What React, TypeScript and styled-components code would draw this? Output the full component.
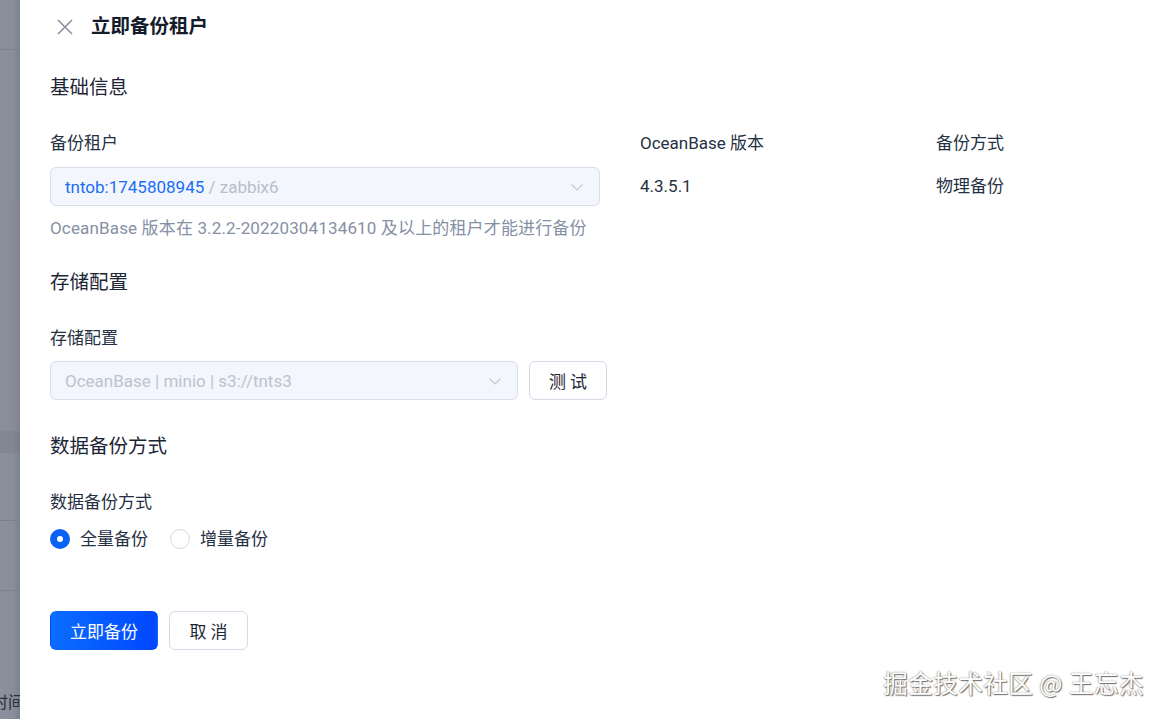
import React from "react";
import styled, { createGlobalStyle } from "styled-components";

const Global = createGlobalStyle`
  html, body { margin: 0; padding: 0; background: #fff; }
  body { font-family: Roboto, "Noto Sans CJK SC", sans-serif; }
  * { box-sizing: border-box; }
`;

const Screen = styled.div`
  display: flex;
  width: 1164px;
  height: 719px;
  overflow: hidden;
  position: relative;
`;

const Backdrop = styled.div`
  width: 20px;
  flex: none;
  display: flex;
  flex-direction: column;
  background: linear-gradient(90deg, #8b909d 0%, #888d9a 65%, #7d8290 100%);
  overflow: hidden;
`;

const BackRow = styled.div<{ $h: number; $bg?: string; $line?: boolean }>`
  height: ${(p) => p.$h}px;
  flex: none;
  background: ${(p) => p.$bg || "transparent"};
  border-bottom: ${(p) => (p.$line ? "1px solid #7b808c" : "none")};
`;

const BackText = styled.div`
  margin-top: auto;
  margin-bottom: 6px;
  margin-left: -8px;
  font-size: 16px;
  line-height: 20px;
  color: #2c2f36;
  white-space: nowrap;
`;

const Drawer = styled.div`
  flex: 1;
  background: #fff;
  padding: 0 30px;
  display: flex;
  flex-direction: column;
`;

const Header = styled.div`
  height: 54px;
  display: flex;
  align-items: center;
  gap: 18px;
  padding-left: 7px;
`;

const CloseBtn = styled.span`
  width: 16px;
  height: 16px;
  display: inline-flex;
  color: #8a92a0;
`;

const Title = styled.div`
  font-size: 19.5px;
  font-weight: 700;
  color: #141c2b;
  line-height: 28px;
`;

const SectionTitle = styled.div<{ $mt: number }>`
  margin-top: ${(p) => p.$mt}px;
  font-size: 19.5px;
  line-height: 28px;
  color: #1c2535;
`;

const FieldsRow = styled.div`
  display: grid;
  grid-template-columns: 550px 256px 200px;
  column-gap: 40px;
  margin-top: 29px;
`;

const Field = styled.div`
  display: flex;
  flex-direction: column;
`;

const Label = styled.div<{ $mb?: number }>`
  font-size: 17px;
  line-height: 24px;
  color: #253043;
  margin-bottom: ${(p) => (p.$mb ?? 12)}px;
`;

const Value = styled.div`
  font-size: 17px;
  line-height: 39px;
  color: #253043;
`;

const Select = styled.div<{ $w?: number }>`
  width: ${(p) => (p.$w ? `${p.$w}px` : "100%")};
  flex: none;
  height: 39px;
  border: 1px solid #d8dfeb;
  border-radius: 6px;
  background: #f3f6fc;
  display: flex;
  align-items: center;
  padding: 0 14px;
  font-size: 17px;
`;

const SelectText = styled.span<{ $c: string }>`
  color: ${(p) => p.$c};
  white-space: pre;
`;

const Arrow = styled.span`
  margin-left: auto;
  display: inline-flex;
  color: #c2c9d5;
  margin-right: 1px;
`;

const Help = styled.div`
  margin-top: 10px;
  font-size: 17px;
  letter-spacing: 0.15px;
  line-height: 24px;
  color: #8590a4;
  white-space: nowrap;
`;

const Inline = styled.div`
  display: flex;
  align-items: center;
  gap: 11px;
`;

const Button = styled.button<{ $primary?: boolean; $w: number }>`
  width: ${(p) => p.$w}px;
  flex: none;
  height: 39px;
  border-radius: 6px;
  font-family: inherit;
  font-size: 17px;
  padding: 0;
  cursor: pointer;
  letter-spacing: ${(p) => (p.$primary ? "0" : "4px")};
  text-indent: ${(p) => (p.$primary ? "0" : "4px")};
  color: ${(p) => (p.$primary ? "#fff" : "#1c2535")};
  background: ${(p) =>
    p.$primary ? "linear-gradient(90deg, #0b6dff 0%, #0047ff 100%)" : "#fff"};
  border: 1px solid ${(p) => (p.$primary ? "transparent" : "#d5dbe6")};
`;

const RadioGroup = styled.div`
  display: flex;
  align-items: center;
  gap: 22px;
  height: 24px;
`;

const RadioItem = styled.label`
  display: flex;
  align-items: center;
  gap: 10px;
  font-size: 17px;
  color: #253043;
  line-height: 24px;
`;

const RadioDot = styled.span<{ $on?: boolean }>`
  width: 20px;
  height: 20px;
  border-radius: 50%;
  box-sizing: border-box;
  border: ${(p) => (p.$on ? "7px solid #0b63f6" : "1px solid #d3d9e3")};
  background: #fff;
`;

const Footer = styled.div`
  margin-top: 60px;
  display: flex;
  gap: 11px;
`;

const Watermark = styled.div`
  position: absolute;
  right: 20px;
  bottom: 19px;
  font-size: 24.5px;
  letter-spacing: 0.5px;
  color: #ffffff;
  text-shadow: 1px 1px 1px #6f6f6f, -0.5px -0.5px 0 #b0b0b0, 0 0 2px #999;
  font-family: "Noto Sans CJK SC", sans-serif;
`;

const Chevron = () => (
  <svg width="14" height="14" viewBox="0 0 14 14" fill="none">
    <path d="M1.5 4.5 L7 10 L12.5 4.5" stroke="currentColor" strokeWidth="1.2" />
  </svg>
);

export default function App() {
  return (
    <>
      <Global />
      <Screen>
        <Backdrop>
          <BackRow $h={50} $line />
          <BackRow $h={147} />
          <BackRow $h={234} $bg="rgba(140,135,150,0.25)" />
          <BackRow $h={22} $bg="rgba(110,112,125,0.25)" />
          <BackRow $h={68} $line />
          <BackRow $h={70} $line />
          <BackText>时间</BackText>
        </Backdrop>
        <Drawer>
          <Header>
            <CloseBtn>
              <svg width="16" height="16" viewBox="0 0 16 16" fill="none">
                <path d="M1 1 L15 15 M15 1 L1 15" stroke="currentColor" strokeWidth="1.6" />
              </svg>
            </CloseBtn>
            <Title>立即备份租户</Title>
          </Header>

          <SectionTitle $mt={20}>基础信息</SectionTitle>
          <FieldsRow>
            <Field>
              <Label>备份租户</Label>
              <Select>
                <SelectText $c="#1b6ef3">tntob:1745808945</SelectText>
                <SelectText $c="#b8bfcb"> / zabbix6</SelectText>
                <Arrow>
                  <Chevron />
                </Arrow>
              </Select>
              <Help>OceanBase 版本在 3.2.2-20220304134610 及以上的租户才能进行备份</Help>
            </Field>
            <Field>
              <Label>OceanBase 版本</Label>
              <Value>4.3.5.1</Value>
            </Field>
            <Field>
              <Label>备份方式</Label>
              <Value>物理备份</Value>
            </Field>
          </FieldsRow>

          <SectionTitle $mt={29}>存储配置</SectionTitle>
          <FieldsRow>
            <Field>
              <Label $mb={11}>存储配置</Label>
              <Inline>
                <Select $w={468}>
                  <SelectText $c="#bcc3ce">OceanBase | minio | s3://tnts3</SelectText>
                  <Arrow>
                    <Chevron />
                  </Arrow>
                </Select>
                <Button $w={78}>测试</Button>
              </Inline>
            </Field>
          </FieldsRow>

          <SectionTitle $mt={33}>数据备份方式</SectionTitle>
          <FieldsRow>
            <Field>
              <Label $mb={13}>数据备份方式</Label>
              <RadioGroup>
                <RadioItem>
                  <RadioDot $on />
                  全量备份
                </RadioItem>
                <RadioItem>
                  <RadioDot />
                  增量备份
                </RadioItem>
              </RadioGroup>
            </Field>
          </FieldsRow>

          <Footer>
            <Button $primary $w={108}>立即备份</Button>
            <Button $w={79}>取消</Button>
          </Footer>
        </Drawer>
        <Watermark>掘金技术社区 @ 王忘杰</Watermark>
      </Screen>
    </>
  );
}
